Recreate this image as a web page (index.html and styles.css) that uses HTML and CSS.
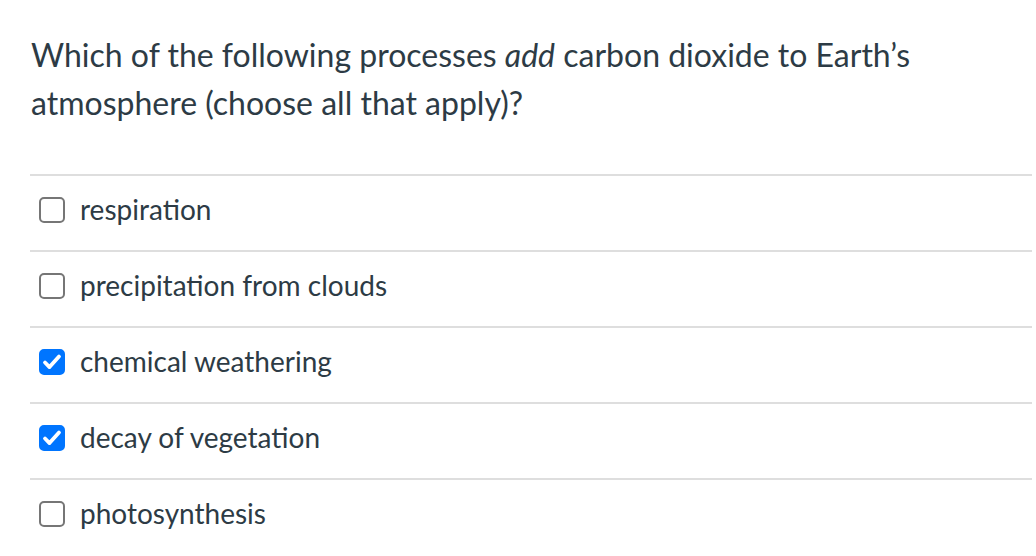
FILE: index.html
```html
<!DOCTYPE html>
<html>
<head>
<meta charset="utf-8">
<link rel="stylesheet" href="styles.css">
</head>
<body>
<div class="question">
  <p class="prompt">Which of the following processes <em>add</em> carbon dioxide to Earth’s atmosphere (choose all that apply)?</p>
  <div class="answers">
    <label class="answer"><span class="box"></span><span class="text">respiration</span></label>
    <label class="answer"><span class="box"></span><span class="text">precipitation from clouds</span></label>
    <label class="answer"><span class="box checked"><svg viewBox="0 0 22 22" width="22" height="22"><path d="M4 11.5l4.5 4.6L18 5.6" fill="none" stroke="#fff" stroke-width="3.8" stroke-linecap="round" stroke-linejoin="round"/></svg></span><span class="text">chemical weathering</span></label>
    <label class="answer"><span class="box checked"><svg viewBox="0 0 22 22" width="22" height="22"><path d="M4 11.5l4.5 4.6L18 5.6" fill="none" stroke="#fff" stroke-width="3.8" stroke-linecap="round" stroke-linejoin="round"/></svg></span><span class="text">decay of vegetation</span></label>
    <label class="answer"><span class="box"></span><span class="text">photosynthesis</span></label>
  </div>
</div>
</body>
</html>
```
FILE: styles.css
```css
html, body {
  margin: 0;
  padding: 0;
  background: #fff;
}
body {
  font-family: Lato, "Open Sans", sans-serif;
  color: #2d3b45;
}
.question {
  padding: 31px 4px 0 30px;
}
.prompt {
  margin: 0 0 47px 1px;
  font-size: 32px;
  line-height: 48px;
}
.prompt em {
  font-style: italic;
}
.answers {
  display: flex;
  flex-direction: column;
}
.answer {
  display: flex;
  align-items: flex-start;
  height: 74px;
  box-sizing: content-box;
  border-top: 2px solid #dedede;
}
.box {
  box-sizing: border-box;
  width: 26px;
  height: 26px;
  margin: 21px 15px 0 9px;
  border: 2px solid #767676;
  border-radius: 5px;
  background: #fff;
  display: flex;
  align-items: center;
  justify-content: center;
  flex: none;
}
.box.checked {
  background: #0075ff;
  border-color: #0075ff;
}
.text {
  font-size: 28px;
  line-height: 34px;
  margin-top: 16px;
}
```
